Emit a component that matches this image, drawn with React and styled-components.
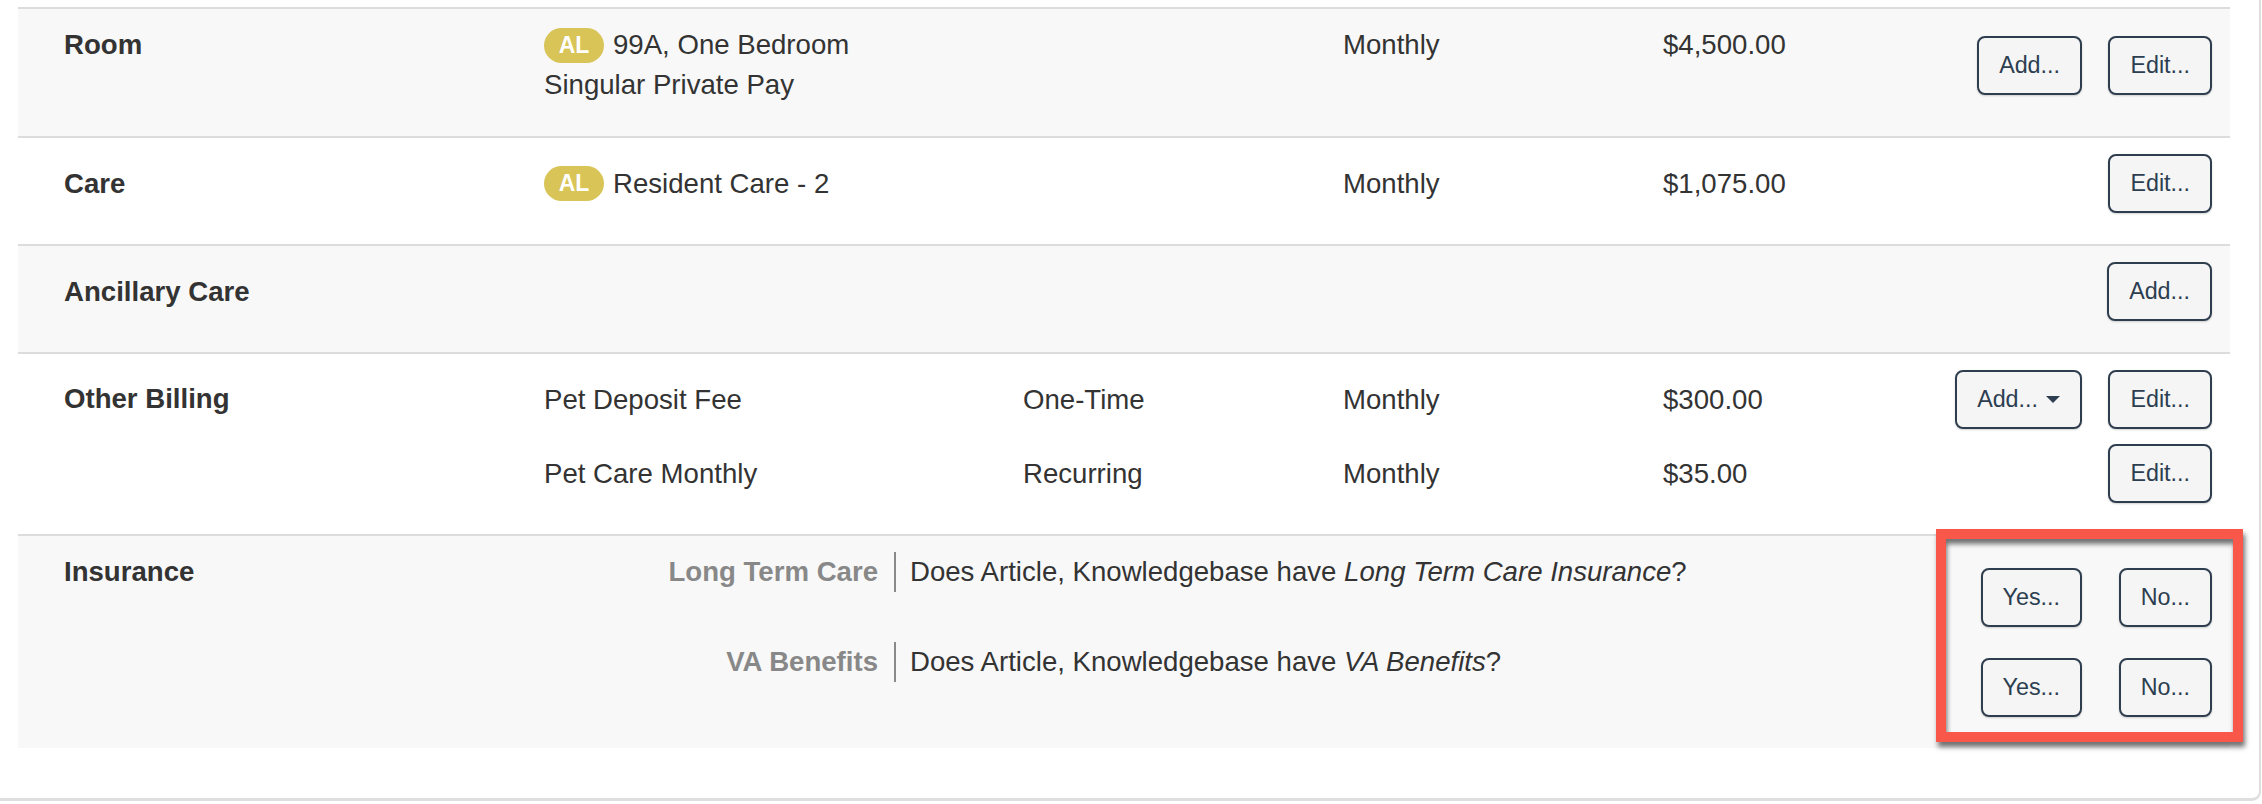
import React from 'react';
import styled, { createGlobalStyle } from 'styled-components';

const GlobalStyle = createGlobalStyle`
  html, body {
    margin: 0;
    padding: 0;
    background: #fff;
  }

  body {
    font-family: "Liberation Sans", Arial, Helvetica, sans-serif;
    color: #333;
  }
`;

const Card = styled.div`
  box-sizing: border-box;
  width: 2261px;
  min-height: 800px;
  padding: 7px 29px 50px 18px;
  border-right: 2px solid #dedede;
  border-bottom: 3px solid #dedede;
  border-bottom-right-radius: 9px;
  background: #fff;
`;

const Row = styled.section`
  position: relative;
  display: flex;
  padding: 16px 18px 16px 46px;
  border-top: 2px solid #dcdcdc;
  background: ${({ $shaded }) => ($shaded ? '#f8f8f8' : '#fff')};
`;

const Label = styled.h3`
  flex: 0 0 480px;
  margin: 0;
  padding-top: ${({ $offset }) => $offset}px;
  font-size: 27.6px;
  line-height: 40px;
  font-weight: 700;
  color: #333;
`;

const Lines = styled.div`
  flex: 1;
  display: flex;
  flex-direction: column;
`;

const Line = styled.div`
  display: grid;
  grid-template-columns: 1fr 260px;
  align-items: center;
  min-height: 59px;
  margin-bottom: 15px;
`;

const Fields = styled.div`
  display: grid;
  grid-template-columns: 479px 320px 320px 1fr;
  align-items: start;
  font-size: 27.6px;
  line-height: 40px;
  color: #333;
`;

const QuestionLine = styled.div`
  display: grid;
  grid-template-columns: 352px 1fr 260px;
  align-items: start;
  font-size: 27.6px;
  line-height: 40px;
  color: #333;
`;

const Topic = styled.div`
  padding-right: 16px;
  border-right: 2px solid #8a8a8a;
  text-align: right;
  font-weight: 700;
  color: #888;
`;

const Question = styled.div`
  padding-left: 14px;

  em {
    font-style: italic;
  }
`;

const Cell = styled.div`
  white-space: nowrap;
`;

const FirstLine = styled.div`
  display: flex;
  align-items: center;
  height: 40px;
`;

const Badge = styled.span`
  display: inline-flex;
  align-items: center;
  justify-content: center;
  width: 60px;
  height: 35px;
  margin-right: 9px;
  border-radius: 18px;
  background: #d9c458;
  color: #fff;
  font-size: 23px;
  font-weight: 700;
  line-height: 1;
`;

const Actions = styled.div`
  display: grid;
  grid-template-columns: 130px 130px;
  justify-items: end;
  align-items: center;
  padding: ${({ $pad }) => $pad || '0'};
`;

const Button = styled.button`
  box-sizing: border-box;
  display: inline-flex;
  align-items: center;
  gap: 8px;
  height: 59px;
  padding: 0 20px;
  font-family: inherit;
  font-size: 23.3px;
  color: #2c3e50;
  background: #f5f5f5;
  border: 2px solid #2f3e4e;
  border-radius: 8px;
  box-shadow: 0 1px 2px rgba(0, 0, 0, 0.18);
  cursor: pointer;
`;

const Highlight = styled.div`
  position: absolute;
  top: -7px;
  right: -13px;
  box-sizing: border-box;
  width: 307px;
  height: 213px;
  border: 10px solid #f9574a;
  box-shadow: 2px 5px 5px rgba(0, 0, 0, 0.55), inset 1px 5px 5px rgba(0, 0, 0, 0.55);
  pointer-events: none;
`;

function Caret() {
  return (
    <svg width="14" height="7" viewBox="0 0 14 7" aria-hidden="true">
      <path d="M0 0h14L7 7z" fill="#2c3e50" />
    </svg>
  );
}

function ActionSlots({ left, right, pad }) {
  return (
    <Actions $pad={pad}>
      {left ? <Button>{left}</Button> : <span />}
      {right ? <Button>{right}</Button> : <span />}
    </Actions>
  );
}

const rows = [
  {
    label: 'Room',
    offset: 0,
    lines: [
      {
        badge: 'AL',
        desc: ['99A, One Bedroom', 'Singular Private Pay'],
        type: '',
        freq: 'Monthly',
        amount: '$4,500.00',
        left: 'Add...',
        right: 'Edit...',
      },
    ],
  },
  {
    label: 'Care',
    offset: 10,
    lines: [
      {
        badge: 'AL',
        desc: ['Resident Care - 2'],
        type: '',
        freq: 'Monthly',
        amount: '$1,075.00',
        right: 'Edit...',
      },
    ],
  },
  {
    label: 'Ancillary Care',
    offset: 10,
    lines: [{ desc: [], right: 'Add...' }],
  },
  {
    label: 'Other Billing',
    offset: 9,
    lines: [
      {
        desc: ['Pet Deposit Fee'],
        type: 'One-Time',
        freq: 'Monthly',
        amount: '$300.00',
        left: (
          <>
            Add...
            <Caret />
          </>
        ),
        right: 'Edit...',
      },
      {
        desc: ['Pet Care Monthly'],
        type: 'Recurring',
        freq: 'Monthly',
        amount: '$35.00',
        right: 'Edit...',
      },
    ],
  },
];

const questions = [
  { topic: 'Long Term Care', subject: 'Long Term Care Insurance' },
  { topic: 'VA Benefits', subject: 'VA Benefits' },
];

export default function App() {
  return (
    <>
      <GlobalStyle />
      <Card>
        {rows.map((row, i) => (
          <Row key={row.label} $shaded={i % 2 === 0}>
            <Label $offset={row.offset}>{row.label}</Label>
            <Lines>
              {row.lines.map((line, j) => (
                <Line key={j}>
                  <Fields>
                    <Cell>
                      {line.desc.length > 0 && (
                        <FirstLine>
                          {line.badge && <Badge>{line.badge}</Badge>}
                          {line.desc[0]}
                        </FirstLine>
                      )}
                      {line.desc.slice(1).map((d) => (
                        <div key={d}>{d}</div>
                      ))}
                    </Cell>
                    <Cell>{line.type}</Cell>
                    <Cell>{line.freq}</Cell>
                    <Cell>{line.amount}</Cell>
                  </Fields>
                  <ActionSlots left={line.left} right={line.right} />
                </Line>
              ))}
            </Lines>
          </Row>
        ))}
        <Row $shaded>
          <Label $offset={0}>Insurance</Label>
          <Lines>
            {questions.map((q) => (
              <QuestionLine key={q.topic}>
                <Topic>{q.topic}</Topic>
                <Question>
                  Does Article, Knowledgebase have <em>{q.subject}</em>?
                </Question>
                <ActionSlots left="Yes..." right="No..." pad="16px 0 15px" />
              </QuestionLine>
            ))}
          </Lines>
          <Highlight />
        </Row>
      </Card>
    </>
  );
}
